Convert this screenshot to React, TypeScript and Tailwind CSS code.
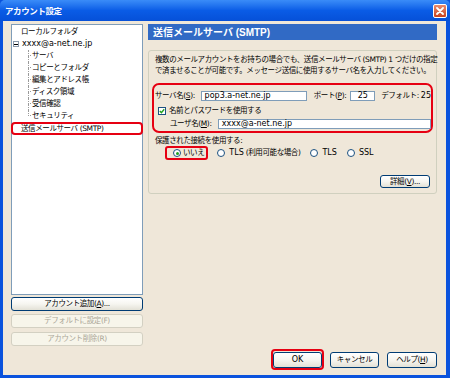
import React from 'react';

const font = "font-['DejaVu_Sans','Noto_Sans_CJK_JP',sans-serif]";

const Btn: React.FC<{ disabled?: boolean; className?: string; children: React.ReactNode }> = ({ disabled, className = '', children }) => (
  <div
    className={`flex items-center justify-center whitespace-nowrap rounded-[3px] border leading-none ${
      disabled
        ? 'border-[#d3d0c2] bg-[#f7f5ea] text-[#aca899]'
        : 'border-[#003c74] bg-gradient-to-b from-white via-[#f6f5f0] to-[#e3e1d6] text-black'
    } ${className}`}
  >
    {children}
  </div>
);

const Radio: React.FC<{ checked?: boolean }> = ({ checked }) => (
  <div className="flex h-[8px] w-[8px] items-center justify-center rounded-full border border-[#1c5180] bg-white">
    {checked && <div className="h-[3px] w-[3px] rounded-full bg-[#21a121]" />}
  </div>
);

const U: React.FC<{ children: React.ReactNode }> = ({ children }) => <span className="underline">{children}</span>;

// latin text is set a bit wider than the japanese
const L: React.FC<{ children: React.ReactNode }> = ({ children }) => <span className="text-[8px] tracking-normal">{children}</span>;

const children = ['サーバ', 'コピーとフォルダ', '編集とアドレス帳', 'ディスク領域', '受信確認', 'セキュリティ'];

export default function App() {
  return (
    <div className={`flex h-[378px] w-[450px] flex-col bg-[#0a52dd] text-[7.5px] tracking-[-0.4px] text-black ${font}`}>
      {/* Title bar */}
      <div className="flex h-[21px] items-center justify-between rounded-t-[5px] bg-gradient-to-b from-[#3a8cf8] via-[#0a5ce6] to-[#0650d8] pl-[5px] pr-[3px]">
        <span className="font-['Noto_Sans_CJK_JP',sans-serif] text-[8.5px] font-bold text-white">アカウント設定</span>
        <div className="flex h-[14px] w-[14px] items-center justify-center rounded-[2px] border border-white bg-gradient-to-b from-[#e98a6c] to-[#c9411c]">
          <svg width="8" height="8" viewBox="0 0 8 8">
            <path d="M1 1 L7 7 M7 1 L1 7" stroke="white" strokeWidth="1.8" strokeLinecap="round" />
          </svg>
        </div>
      </div>

      {/* Body */}
      <div className="mb-[3px] ml-[3px] mr-[4px] flex flex-1 gap-[5px] bg-[#efe7d9] pb-[5px] pl-[8px] pr-[9px] pt-[3px]">
        {/* Left column */}
        <div className="flex w-[132px] flex-col">
          <div className="h-[271px] border border-[#7f9db9] bg-white pt-[1px]">
            <div className="flex h-[12px] items-center pl-[9px]">ローカルフォルダ</div>
            <div className="flex h-[12px] items-center pl-[1px]">
              <div className="flex h-[6px] w-[6px] items-center justify-center border border-[#8c9bac] bg-white">
                <div className="h-px w-[4px] bg-black" />
              </div>
              <span className="ml-[3px]">
                <L>xxxx@a-net.ne.jp</L>
              </span>
            </div>
            {children.map((c, i) => (
              <div key={c} className="flex h-[12px] items-center pl-[16px]">
                <div className="flex h-full w-[3px] flex-col">
                  <div className="h-1/2 border-b border-l border-dotted border-[#9a9a9a]" />
                  {i < children.length - 1 && <div className="h-1/2 border-l border-dotted border-[#9a9a9a]" />}
                </div>
                <span className="ml-[1px]">{c}</span>
              </div>
            ))}
            <div className="-mx-[1px] flex h-[13px] items-center rounded-[4px] border-2 border-[#e60012] pl-[8px]">
              送信メールサーバ (SMTP)
            </div>
          </div>
          <Btn className="mt-[2px] h-[14px]">
            アカウント追加(<U>A</U>)...
          </Btn>
          <Btn disabled className="mt-[3px] h-[14px]">
            デフォルトに設定(F)
          </Btn>
          <Btn disabled className="mt-[4px] h-[14px]">
            アカウント削除(R)
          </Btn>
        </div>

        {/* Right column */}
        <div className="flex w-[289px] flex-col">
          <div className="flex h-[16px] items-center bg-[#316ac5] pl-[5px] font-['Liberation_Sans','Noto_Sans_CJK_JP',sans-serif] text-[10px] font-bold tracking-normal text-white">
            送信メールサーバ (SMTP)
          </div>

          <div className="mt-[10px] flex h-[144px] flex-col rounded-[3px] border border-[#d0d0bf] pb-[5px] pt-[3px]">
            <div className="whitespace-nowrap pl-[6px] leading-[11px]">
              複数のメールアカウントをお持ちの場合でも、送信メールサーバ (SMTP) 1 つだけの指定
              <br />
              で済ませることが可能です。メッセージ送信に使用するサーバ名を入力してください。
            </div>

            <div className="mx-[3px] mt-[7px] flex h-[50px] flex-col rounded-[7px] border-2 border-[#e60012] pb-[2px] pt-[6px]">
              <div className="flex h-[10px] items-center whitespace-nowrap pl-[1px]">
                <span className="w-[46px]">
                  サーバ名(<U>S</U>):
                </span>
                <div className="flex h-[10px] w-[107px] items-center border border-[#7f9db9] bg-white pl-[3px]">
                  <L>pop3.a-net.ne.jp</L>
                </div>
                <span className="ml-[7px] w-[37px]">
                  ポート(<U>P</U>):
                </span>
                <div className="flex h-[10px] w-[25px] items-center justify-center border border-[#7f9db9] bg-white">
                  <L>25</L>
                </div>
                <span className="ml-[6px]">
                  デフォルト: <L>25</L>
                </span>
              </div>
              <div className="mt-[5px] flex h-[10px] items-center pl-[4px]">
                <div className="flex h-[8px] w-[8px] items-center justify-center border border-[#1c5180] bg-white">
                  <svg width="6" height="6" viewBox="0 0 6 6">
                    <path d="M0.8 3 L2.4 4.6 L5.2 1.2" stroke="#21a121" strokeWidth="1.4" fill="none" />
                  </svg>
                </div>
                <span className="ml-[3px]">名前とパスワードを使用する</span>
              </div>
              <div className="mt-[3px] flex h-[10px] items-center pl-[16px]">
                <span className="w-[48px]">
                  ユーザ名(<U>M</U>):
                </span>
                <div className="flex h-[10px] w-[214px] items-center border border-[#7f9db9] bg-white pl-[3px]">
                  <L>xxxx@a-net.ne.jp</L>
                </div>
              </div>
            </div>

            <div className="mt-[3px] flex h-[10px] items-center pl-[6px]">保護された接続を使用する:</div>

            <div className="flex h-[14px] items-center whitespace-nowrap pl-[16px]">
              <div className="flex h-[14px] items-center gap-[2px] rounded-[3px] border-2 border-[#e60012] pl-[6px] pr-[2px]">
                <Radio checked />
                <span>いいえ</span>
              </div>
              <div className="ml-[9px] flex items-center gap-[4px]">
                <Radio />
                <span>
                  <L>TLS</L> (利用可能な場合)
                </span>
              </div>
              <div className="ml-[10px] flex items-center gap-[4px]">
                <Radio />
                <L>TLS</L>
              </div>
              <div className="ml-[10px] flex items-center gap-[4px]">
                <Radio />
                <L>SSL</L>
              </div>
            </div>

            <div className="mt-[15px] flex justify-end pr-[6px]">
              <Btn className="h-[13px] w-[50px]">
                詳細(<U>V</U>)...
              </Btn>
            </div>
          </div>

          <div className="flex-1" />

          <div className="flex items-center justify-end">
            <div className="flex h-[21px] w-[53px] items-center justify-center rounded-[4px] border-2 border-[#e60012]">
              <Btn className="h-[16px] w-[49px]">
                <L>OK</L>
              </Btn>
            </div>
            <Btn className="ml-[6px] h-[16px] w-[49px]">キャンセル</Btn>
            <Btn className="ml-[8px] h-[16px] w-[50px]">
              ヘルプ(<U>H</U>)
            </Btn>
          </div>
        </div>
      </div>
    </div>
  );
}
